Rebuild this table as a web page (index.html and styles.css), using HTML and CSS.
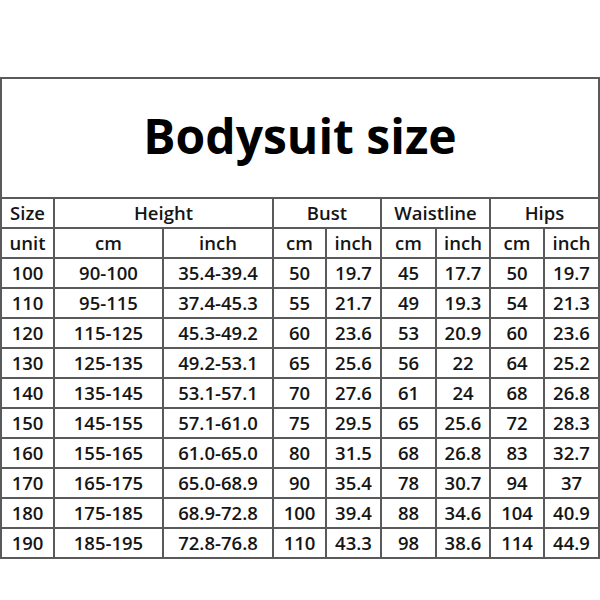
FILE: index.html
```html
<!DOCTYPE html>
<html>
<head>
<meta charset="utf-8">
<link rel="stylesheet" href="styles.css">
</head>
<body>
<div class="page">
<table class="chart">
<colgroup>
<col class="c1"><col class="c2"><col class="c3"><col class="c4"><col class="c5"><col class="c6"><col class="c7"><col class="c8"><col class="c9">
</colgroup>
<tr class="title-row"><td colspan="9" class="title">Bodysuit size</td></tr>
<tr><td>Size</td><td colspan="2">Height</td><td colspan="2">Bust</td><td colspan="2">Waistline</td><td colspan="2">Hips</td></tr>
<tr><td>unit</td><td>cm</td><td>inch</td><td>cm</td><td>inch</td><td>cm</td><td>inch</td><td>cm</td><td>inch</td></tr>
<tr><td>100</td><td>90-100</td><td>35.4-39.4</td><td>50</td><td>19.7</td><td>45</td><td>17.7</td><td>50</td><td>19.7</td></tr>
<tr><td>110</td><td>95-115</td><td>37.4-45.3</td><td>55</td><td>21.7</td><td>49</td><td>19.3</td><td>54</td><td>21.3</td></tr>
<tr><td>120</td><td>115-125</td><td>45.3-49.2</td><td>60</td><td>23.6</td><td>53</td><td>20.9</td><td>60</td><td>23.6</td></tr>
<tr><td>130</td><td>125-135</td><td>49.2-53.1</td><td>65</td><td>25.6</td><td>56</td><td>22</td><td>64</td><td>25.2</td></tr>
<tr><td>140</td><td>135-145</td><td>53.1-57.1</td><td>70</td><td>27.6</td><td>61</td><td>24</td><td>68</td><td>26.8</td></tr>
<tr><td>150</td><td>145-155</td><td>57.1-61.0</td><td>75</td><td>29.5</td><td>65</td><td>25.6</td><td>72</td><td>28.3</td></tr>
<tr><td>160</td><td>155-165</td><td>61.0-65.0</td><td>80</td><td>31.5</td><td>68</td><td>26.8</td><td>83</td><td>32.7</td></tr>
<tr><td>170</td><td>165-175</td><td>65.0-68.9</td><td>90</td><td>35.4</td><td>78</td><td>30.7</td><td>94</td><td>37</td></tr>
<tr><td>180</td><td>175-185</td><td>68.9-72.8</td><td>100</td><td>39.4</td><td>88</td><td>34.6</td><td>104</td><td>40.9</td></tr>
<tr><td>190</td><td>185-195</td><td>72.8-76.8</td><td>110</td><td>43.3</td><td>98</td><td>38.6</td><td>114</td><td>44.9</td></tr>
</table>
</div>
</body>
</html>
```
FILE: styles.css
```css
html, body {
  margin: 0;
  padding: 0;
  background: #fff;
}
.page {
  width: 600px;
  height: 600px;
  padding-top: 77px;
  box-sizing: border-box;
}
.chart {
  border-collapse: separate;
  border-spacing: 0;
  table-layout: fixed;
  width: 600px;
  border-top: 2px solid #5a5a5a;
  border-left: 2px solid #5a5a5a;
  box-sizing: border-box;
  font-family: "Open Sans", "Noto Sans", sans-serif;
  font-weight: 600;
  color: #151515;
}
.c1 { width: 53px; }
.c2 { width: 109px; }
.c3 { width: 110px; }
.c4 { width: 53px; }
.c5 { width: 55px; }
.c6 { width: 55px; }
.c7 { width: 54px; }
.c8 { width: 54px; }
.c9 { width: 55px; }
.chart td {
  box-sizing: border-box;
  border-right: 2px solid #5a5a5a;
  border-bottom: 2px solid #5a5a5a;
  height: 30px;
  padding: 0;
  text-align: center;
  vertical-align: middle;
  font-size: 18.5px;
  line-height: 20px;
  white-space: nowrap;
  overflow: hidden;
}
.chart .title-row td {
  height: 120px;
}
.chart td.title {
  font-size: 48px;
  font-weight: 700;
  color: #000;
  line-height: 48px;
  vertical-align: top;
  padding-top: 33px;
}
```
